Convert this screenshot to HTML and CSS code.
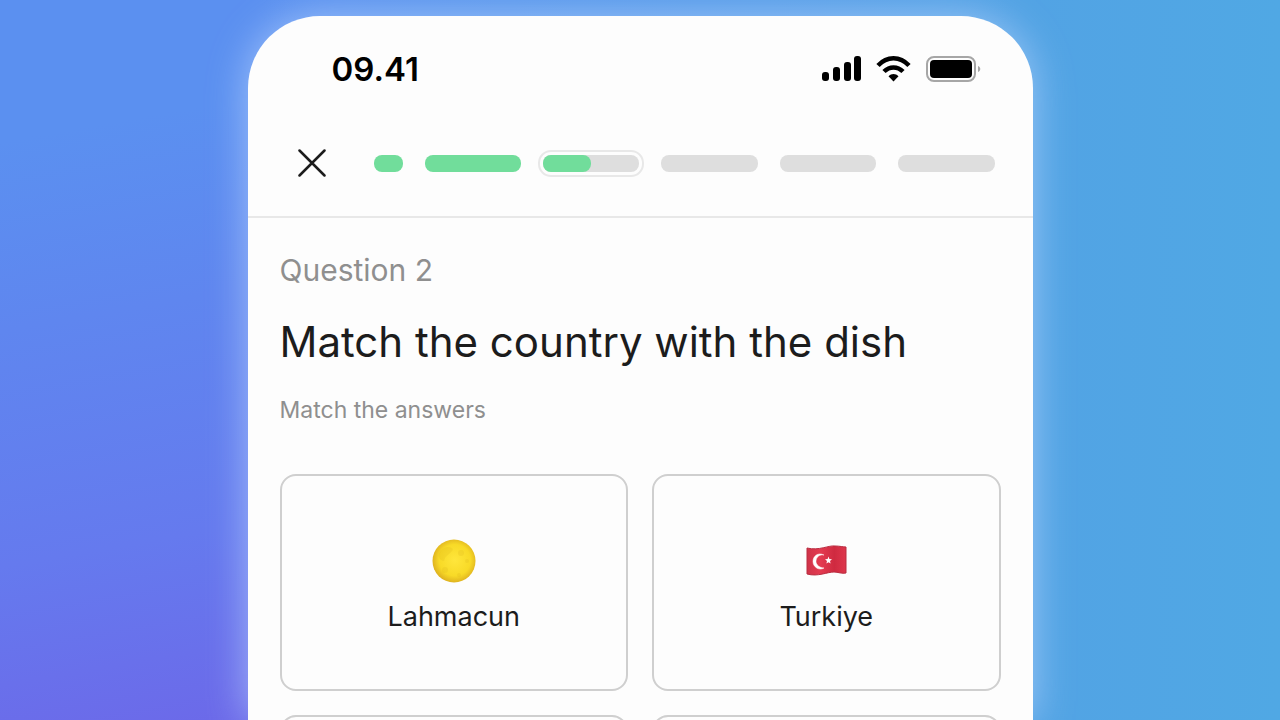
FILE: index.html
```html
<!DOCTYPE html>
<html lang="en">
<head>
    <meta charset="utf-8">
    <meta name="viewport" content="width=device-width, initial-scale=1">
    <title>Match the country with the dish</title>
    <link rel="stylesheet" href="styles.css">
</head>
<body>

<div class="phone">
    <div class="status-bar">
        <span class="time">09.41</span>
        <svg class="status-icons" width="160" height="28" viewBox="0 0 160 28" aria-hidden="true">
            <!-- signal -->
            <rect x="1" y="17" width="7" height="9" rx="3"/>
            <rect x="12" y="12" width="7" height="14" rx="3"/>
            <rect x="23" y="7" width="7" height="19" rx="3"/>
            <rect x="33" y="1" width="7" height="25" rx="3"/>
            <!-- wifi -->
            <g fill="none" stroke="#000" stroke-width="4.5">
                <path d="M57 10.5C66 0.8 79 0.8 88 10.5"/>
                <path d="M63 16.5C68.5 11 76.5 11 82 16.5"/>
            </g>
            <path d="M67.5 21.2C70.5 18.2 74.5 18.2 77.5 21.2L72.5 26.5Z"/>
            <!-- battery -->
            <rect x="106" y="2" width="48" height="24" rx="7" fill="none" stroke="#a6a6a6" stroke-width="2"/>
            <rect x="109" y="5" width="42" height="18" rx="4"/>
            <path d="M157 11C160 12 160 16 157 17Z" fill="#a6a6a6"/>
        </svg>
    </div>

    <header class="quiz-header">
        <button class="close" type="button" aria-label="Close">
            <svg width="28" height="28" viewBox="0 0 28 28" fill="none" stroke="#1c1c1c" stroke-width="2.5" stroke-linecap="round">
                <path d="M1.5 1.5L26.5 26.5M26.5 1.5L1.5 26.5"/>
            </svg>
        </button>
        <div class="steps">
            <span class="step step-short done"></span>
            <span class="step done"></span>
            <span class="step current"><span class="fill"></span></span>
            <span class="step"></span>
            <span class="step"></span>
            <span class="step"></span>
        </div>
    </header>

    <main class="question">
        <p class="label">Question 2</p>
        <h1>Match the country with the dish</h1>
        <p class="hint">Match the answers</p>

        <div class="answers">
            <button class="answer" type="button">
                <svg width="44" height="44" viewBox="0 0 44 44" aria-hidden="true">
                    <defs>
                        <radialGradient id="moon" cx="52%" cy="48%" r="52%">
                            <stop offset="0" stop-color="#ffe63c"/>
                            <stop offset="0.7" stop-color="#f8da27"/>
                            <stop offset="1" stop-color="#dfb31f"/>
                        </radialGradient>
                    </defs>
                    <circle cx="22" cy="22" r="21.5" fill="url(#moon)"/>
                    <g fill="#d9b21c" opacity="0.2">
                        <path d="M7 15C10 8 17 6 21 10C19 15 13 16 12 22C9 22 6 19 7 15Z"/>
                        <circle cx="29" cy="14" r="3"/>
                        <circle cx="35" cy="22" r="2"/>
                        <circle cx="13" cy="31" r="3"/>
                        <circle cx="27" cy="36" r="2"/>
                    </g>
                </svg>
                <span>Lahmacun</span>
            </button>
            <button class="answer" type="button">
                <svg width="44" height="44" viewBox="0 0 44 44" aria-hidden="true">
                    <defs>
                        <linearGradient id="flag">
                            <stop offset="0" stop-color="#cf3349"/>
                            <stop offset="0.35" stop-color="#e43a50"/>
                            <stop offset="0.7" stop-color="#cf2a40"/>
                            <stop offset="1" stop-color="#de364c"/>
                        </linearGradient>
                    </defs>
                    <path d="M3 9C15 12 25 6 31 7C36 7 39 8 42 8V34C38 35 34 33 30 33C23 33 14 38 3 35Z" fill="url(#flag)" stroke="#b92c40" stroke-width="1"/>
                    <path d="M20 16C14 13 9 17 9 22.5C9 28 15 32 20 29C16 29 12 26 12 22.5C12 18 16 15 20 16Z" fill="#fff" stroke="#fff" stroke-width="0.5"/>
                    <path d="M24.5 17.5L25.4 20L28 20.3L26 22L26.6 24.5L24.5 23.2L22.4 24.5L23 22L21 20.3L23.6 20Z" fill="#fff"/>
                </svg>
                <span>Turkiye</span>
            </button>
            <button class="answer" type="button" aria-label="Answer 3"></button>
            <button class="answer" type="button" aria-label="Answer 4"></button>
        </div>
    </main>
</div>

</body>
</html>
```
FILE: styles.css
```css
* { box-sizing: border-box; }
body {
    margin: 0;
    height: 100vh;
    overflow: hidden;
    padding: 16px 16px 0;
    font-family: Inter, "Liberation Sans", sans-serif;
    color: #1c1c1c;
    background:
        linear-gradient(90deg, rgba(82, 160, 230, 0) 20%, #52a3e4 80%, #50a8e4 100%),
        linear-gradient(170deg, #5b90f0 15%, #5f86ef 35%, #657aee 60%, #6d66e8 85%);
}
h1, p { margin: 0; font-weight: 400; }

.phone {
    max-width: 785px;
    height: 100%;
    overflow: hidden;
    margin: 0 auto;
    background: #fdfdfd;
    border-radius: 72px 72px 0 0;
    box-shadow: 0 0 40px rgba(190, 215, 255, 0.7);
}

.status-bar { display: flex; justify-content: space-between; align-items: center; height: 106px; padding: 0 52px 0 84px; color: #000; }
.time { font-size: 33px; font-weight: 600; }

.quiz-header { display: flex; align-items: center; gap: 48px; height: 96px; padding: 0 38px 12px 50px; border-bottom: 2px solid #e8e8e8; }
.close { display: flex; padding: 0; border: none; background: none; cursor: pointer; }
.steps { display: flex; flex: 1; gap: 22px; }
.step { flex: 1; height: 17px; border-radius: 8px; background: #dedede; }
.step-short { flex: 0 0 29px; }
.done, .fill { background: #71dd9b; }
.current { outline: 2px solid #e8e8e8; outline-offset: 3px; }
.fill { display: block; width: 50%; height: 100%; border-radius: 8px; }

.question { padding: 32px 32px 0; }
.label { font-size: 30px; line-height: 40px; color: #8f8f8f; }
h1 { margin-top: 24px; font-size: 42px; line-height: 56px; }
.hint { margin-top: 24px; font-size: 23px; line-height: 32px; color: #8f8f8f; }

.answers { display: grid; grid-template-columns: 1fr 1fr; gap: 24px; margin-top: 48px; }
.answer {
    display: flex;
    flex-direction: column;
    align-items: center;
    justify-content: center;
    gap: 16px;
    height: 217px;
    padding: 8px 0 0;
    border: 2px solid #cfcfcf;
    border-radius: 16px;
    background: #fdfdfd;
    font: inherit;
    font-size: 27px;
    line-height: 36px;
    color: #1c1c1c;
    cursor: pointer;
}
```
